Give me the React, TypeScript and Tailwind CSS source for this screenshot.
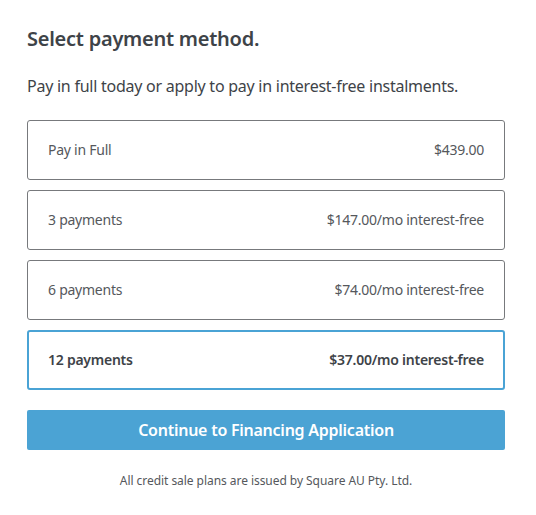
import React, { useState } from 'react';

const options = [
    { label: 'Pay in Full', price: '$439.00' },
    { label: '3 payments', price: '$147.00/mo interest-free' },
    { label: '6 payments', price: '$74.00/mo interest-free' },
    { label: '12 payments', price: '$37.00/mo interest-free' },
];

const App: React.FC = () => {
    const [selected, setSelected] = useState(3);

    return (
        <div className="w-[536px] h-[515px] bg-white pl-[27px] pr-[31px] pt-[27px] text-[#3e4348] tracking-[-0.25px]" style={{ fontFamily: '"Noto Sans", "Open Sans", sans-serif' }}>
            <h2 className="text-[20px] leading-[24px] font-semibold">Select payment method.</h2>
            <p className="mt-[25px] text-[16px] leading-[20px]">Pay in full today or apply to pay in interest-free instalments.</p>

            <div className="mt-[24px] flex flex-col gap-[10px]">
                {options.map((opt, i) => {
                    const active = i === selected;
                    return (
                        <button
                            key={opt.label}
                            onClick={() => setSelected(i)}
                            className={
                                active
                                    ? 'h-[60px] w-full flex items-center justify-between px-[19px] pb-[2px] rounded-[3px] border-2 border-[#4aa3d5] text-[14px] font-semibold text-[#3e4348]'
                                    : 'h-[60px] w-full flex items-center justify-between px-[20px] pb-[2px] rounded-[3px] border border-[#77797c] text-[14px] text-[#55585c]'
                            }
                        >
                            <span>{opt.label}</span>
                            <span>{opt.price}</span>
                        </button>
                    );
                })}
            </div>

            <button className="mt-[20px] h-[40px] w-full rounded-[2px] bg-[#4ba3d4] text-white text-[16px] font-semibold">
                Continue to Financing Application
            </button>

            <p className="mt-[23px] text-center text-[12px] leading-[16px] tracking-[-0.05px] text-[#55585c]">All credit sale plans are issued by Square AU Pty. Ltd.</p>
        </div>
    );
};

export default App;
